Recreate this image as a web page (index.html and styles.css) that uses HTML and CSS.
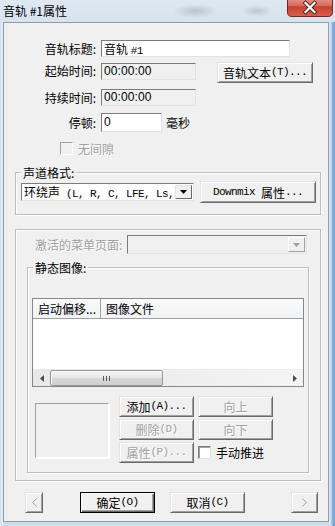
FILE: index.html
```html
<!DOCTYPE html>
<html lang="zh-CN">
<head>
    <meta charset="UTF-8">
    <meta name="viewport" content="width=device-width, initial-scale=1.0">
    <title>音轨 #1属性</title>
    <link rel="stylesheet" href="styles.css">
</head>
<body>
<div class="window">
    <div class="titlebar">
        <span class="title">音轨 #1属性</span>
        <div class="close">
            <svg width="46" height="18" viewBox="0 0 46 18">
                <defs>
                    <linearGradient id="red" x1="0" y1="0" x2="0" y2="1">
                        <stop offset="0" stop-color="#e8a093"/>
                        <stop offset="0.45" stop-color="#d7685a"/>
                        <stop offset="0.5" stop-color="#c8412f"/>
                        <stop offset="1" stop-color="#d6624d"/>
                    </linearGradient>
                </defs>
                <path d="M0.5 -2 H45.5 V13 Q45.5 17.5 41 17.5 H5 Q0.5 17.5 0.5 13 Z" fill="url(#red)" stroke="#6e2a22"/>
                <path d="M18.5 4 L27.5 13 M27.5 4 L18.5 13" stroke="#4a1f1a" stroke-width="4" stroke-linecap="square"/>
                <path d="M18.5 4 L27.5 13 M27.5 4 L18.5 13" stroke="#fff" stroke-width="2.2" stroke-linecap="square"/>
            </svg>
        </div>
    </div>

    <div class="client">
        <div class="row r-title">
            <label class="lbl">音轨标题:</label>
            <div class="edit w-title">音轨 <span class="m">#1</span></div>
        </div>
        <div class="row r-start">
            <label class="lbl">起始时间:</label>
            <div class="edit ro w-time">00:00:00</div>
            <button class="btn b-text">音轨文本<span class="m">(T)...</span></button>
        </div>
        <div class="row r-dur">
            <label class="lbl">持续时间:</label>
            <div class="edit ro w-time">00:00:00</div>
        </div>
        <div class="row r-pause">
            <label class="lbl">停顿:</label>
            <div class="edit w-pause">0</div>
            <span class="unit">毫秒</span>
        </div>
        <div class="row r-gap">
            <span class="check off"></span>
            <span class="ctext off">无间隙</span>
        </div>

        <fieldset class="group g-channel">
            <legend>声道格式:</legend>
            <div class="row ch-row">
                <div class="combo c-channel">
                    <span class="combo-text">环绕声<span class="m">&nbsp;(L, R, C, LFE, Ls,</span></span>
                    <span class="drop">
                        <svg width="7" height="4" viewBox="0 0 7 4"><path d="M0 0 H7 L3.5 4 Z" fill="#000"/></svg>
                    </span>
                </div>
                <button class="btn b-downmix"><span class="m">Downmix&nbsp;</span>属性<span class="m">...</span></button>
            </div>
        </fieldset>

        <fieldset class="group g-menu">
            <div class="row menu-row">
                <label class="lbl-menu off">激活的菜单页面:</label>
                <div class="combo c-menu">
                    <span class="combo-text"></span>
                    <span class="drop">
                        <svg width="7" height="4" viewBox="0 0 7 4"><path d="M0 0 H7 L3.5 4 Z" fill="#a0a0a0"/></svg>
                    </span>
                </div>
            </div>

            <fieldset class="group g-static">
                <legend>静态图像:</legend>
                <div class="listview">
                    <div class="lv-head">
                        <span class="col c1">启动偏移...</span>
                        <span class="col c2">图像文件</span>
                    </div>
                    <div class="lv-body"></div>
                    <div class="hscroll">
                        <span class="arrow">
                            <svg width="4" height="7" viewBox="0 0 4 7"><path d="M4 0 V7 L0 3.5 Z" fill="#4d4d4d"/></svg>
                        </span>
                        <span class="thumb">
                            <svg width="7" height="5" viewBox="0 0 7 5"><path d="M0.5 0 V5 M3.5 0 V5 M6.5 0 V5" stroke="#5a5a5a"/></svg>
                        </span>
                        <span class="track"></span>
                        <span class="arrow">
                            <svg width="4" height="7" viewBox="0 0 4 7"><path d="M0 0 V7 L4 3.5 Z" fill="#4d4d4d"/></svg>
                        </span>
                    </div>
                </div>

                <div class="actions">
                    <div class="preview"></div>
                    <div class="btn-grid">
                        <button class="btn">添加<span class="m">(A)...</span></button>
                        <button class="btn off">向上</button>
                        <button class="btn off">删除<span class="m">(D)</span></button>
                        <button class="btn off">向下</button>
                        <button class="btn off">属性<span class="m">(P)...</span></button>
                        <div class="row manual">
                            <span class="check"></span>
                            <span class="ctext">手动推进</span>
                        </div>
                    </div>
                </div>
            </fieldset>
        </fieldset>

        <div class="row nav">
            <button class="btn off b-prev">
                <svg width="5" height="9" viewBox="0 0 5 9"><path d="M4.5 0.5 L0.8 4.5 L4.5 8.5" fill="none" stroke="#a0a0a0"/></svg>
            </button>
            <button class="btn default b-ok">确定<span class="m">(O)</span></button>
            <button class="btn b-cancel">取消<span class="m">(C)</span></button>
            <button class="btn off b-next">
                <svg width="5" height="9" viewBox="0 0 5 9"><path d="M0.5 0.5 L4.2 4.5 L0.5 8.5" fill="none" stroke="#a0a0a0"/></svg>
            </button>
        </div>
    </div>
</div>
</body>
</html>
```

FILE: styles.css
```css
* {
    box-sizing: border-box;
}
html, body {
    margin: 0;
    padding: 0;
}
body {
    width: 335px;
    height: 526px;
    overflow: hidden;
    font-family: "Noto Sans CJK SC", "Liberation Sans", sans-serif;
    font-size: 12px;
    color: #000;
    background: #c4d6e9;
}
.window {
    height: 526px;
    padding: 0 6px 4px 3px;
    background:
        linear-gradient(90deg, #d4e2f0 0, #e3ecf5 3px, transparent 3px, transparent 329px, #e3ecf5 329px, #c9dbee 331px, #7ca6d3 333px),
        linear-gradient(#dbe5ef, #d5e1ee 22px, #cddcec);
}

/* title bar */
.titlebar {
    height: 22px;
    display: flex;
    align-items: flex-start;
    background:
        radial-gradient(ellipse 22px 7px at 195px 11px, rgba(120,130,145,0.35), transparent),
        radial-gradient(ellipse 16px 6px at 257px 11px, rgba(120,130,145,0.3), transparent),
        linear-gradient(#dfe8f1, #d8e3ee);
    margin: 0 -6px 0 -3px;
    padding-left: 3px;
}
.title {
    line-height: 22px;
    font-size: 12px;
    flex: 1;
}
.close {
    width: 46px;
    height: 18px;
    margin-right: 2px;
    margin-top: -1px;
}
.close svg {
    display: block;
}

/* client area */
.client {
    width: 326px;
    height: 500px;
    border: 1px solid #8f9cab;
    background: #f0f0f0;
}
.row {
    display: flex;
    align-items: center;
}
.r-title { margin-top: 17px; height: 17px; }
.r-start { margin-top: 5px; height: 21px; align-items: flex-start; }
.r-start .edit { margin-top: 1px; }
.r-dur { margin-top: 6px; height: 17px; }
.r-pause { margin-top: 7px; height: 19px; }
.r-gap { margin-top: 10px; height: 13px; }

.lbl {
    width: 92px;
    margin-right: 5px;
    text-align: right;
    line-height: 17px;
}
.edit {
    height: 17px;
    border: 1px solid;
    border-color: #7b7b7b #e3e3e3 #e3e3e3 #7b7b7b;
    background: #fff;
    padding-left: 2px;
    line-height: 15px;
    white-space: nowrap;
    overflow: hidden;
}
.edit.ro {
    background: #f0f0f0;
    font-family: "Liberation Sans", sans-serif;
    letter-spacing: 0.1px;
}
.w-title { width: 189px; }
.w-time { width: 95px; }
.w-pause { width: 61px; height: 19px; line-height: 17px; font-family: "Liberation Sans", sans-serif; }
.unit { margin-left: 4px; line-height: 17px; }

.m {
    font-family: "Liberation Mono", monospace;
    font-size: 11px;
    letter-spacing: -0.6px;
}

/* buttons */
.btn {
    font: inherit;
    color: #000;
    height: 21px;
    padding: 0;
    background: #f0f0f0;
    border: 1px solid;
    border-color: #e3e3e3 #696969 #696969 #e3e3e3;
    box-shadow: inset 1px 1px 0 #fff, inset -1px -1px 0 #a0a0a0;
    line-height: 17px;
    white-space: nowrap;
    display: flex;
    align-items: center;
    justify-content: center;
}
.btn.default {
    border-color: #000;
    box-shadow: inset 1px 1px 0 #fff, inset -1px -1px 0 #696969, inset -2px -2px 0 #a0a0a0;
}
.off {
    color: #a0a0a0;
    text-shadow: 1px 1px 0 #fff;
}
.b-text {
    margin-left: 21px;
    width: 96px;
}

/* checkboxes */
.check {
    width: 13px;
    height: 13px;
    border: 1px solid;
    border-color: #7b7b7b #e3e3e3 #e3e3e3 #7b7b7b;
    box-shadow: inset 1px 1px 0 #a0a0a0;
    background: #fff;
}
.check.off {
    background: #f0f0f0;
    border-color: #a0a0a0 #fff #fff #a0a0a0;
    box-shadow: none;
    text-shadow: none;
}
.r-gap .check { margin-left: 56px; }
.ctext {
    margin-left: 5px;
    line-height: 15px;
}

/* group boxes */
.group {
    margin: 0 0 0 11px;
    padding: 0;
    min-width: 0;
    width: 306px;
    border: 1px solid #b9bec3;
    box-shadow: inset 1px 1px 0 #fff, 1px 1px 0 #fff;
}
.group legend {
    margin-left: 5px;
    padding: 0 2px;
    line-height: 17px;
    height: 17px;
    background: #f0f0f0;
}
.g-channel {
    margin-top: 9px;
}
.ch-row {
    height: 22px;
    padding-left: 5px;
    margin-bottom: 11px;
}

/* combo boxes */
.combo {
    height: 18px;
    border: 1px solid;
    border-color: #7b7b7b #e3e3e3 #e3e3e3 #7b7b7b;
    background: #fff;
    display: flex;
    align-items: stretch;
    padding: 1px;
}
.combo-text {
    flex: 1;
    white-space: nowrap;
    line-height: 14px;
    padding-left: 1px;
}
.combo .drop {
    width: 17px;
    border: 1px solid;
    border-color: #e3e3e3 #696969 #696969 #e3e3e3;
    background: #f0f0f0;
    display: flex;
    align-items: center;
    justify-content: center;
}
.c-channel {
    width: 173px;
}
.b-downmix {
    margin-left: 6px;
    width: 116px;
    height: 22px;
}

.g-menu {
    margin-top: 14px;
}
.menu-row {
    margin-top: 5px;
    height: 19px;
}
.lbl-menu {
    margin-left: 19px;
    width: 92px;
    line-height: 17px;
}
.c-menu {
    width: 180px;
    height: 19px;
    background: #f0f0f0;
}
.c-menu .drop {
    border-color: #fff #a0a0a0 #a0a0a0 #fff;
}

.g-static {
    width: 282px;
    margin-top: 5px;
    margin-bottom: 7px;
    padding-bottom: 9px;
}

/* list view */
.listview {
    margin: 22px 0 0 4px;
    width: 272px;
    height: 89px;
    border: 1px solid #828790;
    background: #fff;
    display: flex;
    flex-direction: column;
}
.lv-head {
    height: 20px;
    display: flex;
    background: linear-gradient(#fafafa, #f1f2f4);
    border-bottom: 1px solid #a0a0a0;
}
.col {
    line-height: 19px;
    padding-left: 5px;
    white-space: nowrap;
}
.c1 {
    width: 68px;
    border-right: 1px solid #a0a0a0;
}
.c2 {
    flex: 1;
}
.lv-body {
    flex: 1;
}
.hscroll {
    height: 17px;
    display: flex;
    background: linear-gradient(90deg, #e8e8e8, #f4f4f4);
    border-top: 1px solid #eaeaea;
}
.arrow {
    width: 17px;
    display: flex;
    align-items: center;
    justify-content: center;
}
.thumb {
    width: 113px;
    border: 1px solid #979797;
    border-radius: 2px;
    background: linear-gradient(#f4f4f4, #e7e7e7 50%, #d8d8d8 51%, #cfcfcf);
    box-shadow: inset 1px 1px 0 #fcfcfc;
    display: flex;
    align-items: center;
    justify-content: center;
}
.track {
    flex: 1;
}

/* image buttons */
.actions {
    display: flex;
    margin-top: 9px;
}
.preview {
    margin: 7px 0 0 7px;
    width: 74px;
    height: 55px;
    border: 1px solid;
    border-color: #a0a0a0 #fff #fff #a0a0a0;
    box-shadow: 1px 1px 0 #fff;
}
.btn-grid {
    margin-left: 10px;
    display: grid;
    grid-template-columns: 75px 75px;
    grid-auto-rows: 21px;
    column-gap: 4px;
    row-gap: 2px;
}
.manual .ctext {
    margin-left: 5px;
}

/* bottom navigation */
.nav {
    margin-top: 11px;
    height: 21px;
}
.b-prev {
    margin-left: 21px;
    width: 18px;
}
.b-ok {
    margin-left: 37px;
    width: 75px;
}
.b-cancel {
    margin-left: 15px;
    width: 75px;
}
.b-next {
    margin-left: 46px;
    width: 27px;
}
```
